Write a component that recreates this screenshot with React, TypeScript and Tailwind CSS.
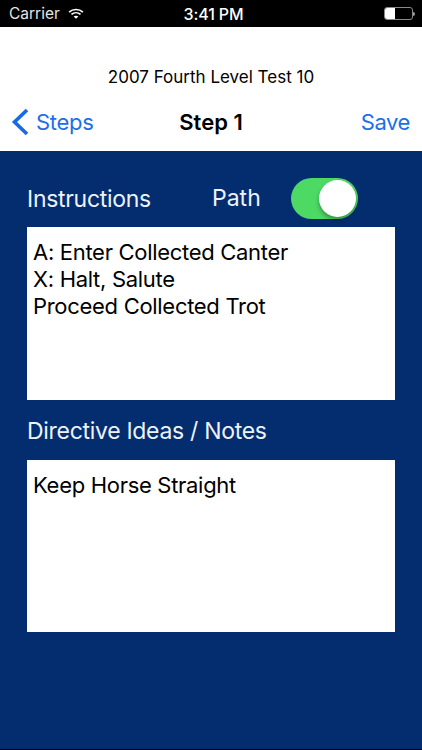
const font = { fontFamily: '"Inter", "Liberation Sans", sans-serif' };

function WifiIcon() {
  return (
    <svg width="16" height="12" viewBox="0 0 17 13" fill="none" stroke="white" strokeWidth="1.7">
      <path d="M1 4.4C5.2.6 11.8.6 16 4.4" />
      <path d="M3.6 7C6.4 4.6 10.6 4.6 13.4 7" />
      <path d="M8.5 11.6 6 9.2c1.4-1 3.6-1 5 0z" fill="white" stroke="none" />
    </svg>
  );
}

function Battery() {
  return (
    <div className="flex items-center">
      <div className="w-[29px] h-[13px] rounded-[3px] border border-[#8a8a8a]">
        <div className="w-[10px] h-full rounded-l-[2px] bg-white" />
      </div>
      <div className="w-[2px] h-[4px] bg-[#9a9a9a] rounded-r-sm" />
    </div>
  );
}

function TextBox({ lines, height }: { lines: string[]; height: string }) {
  return (
    <div className={`${height} bg-white border border-white px-[6px] pt-[11px] text-[22px] leading-[27px] tracking-[-0.3px] text-black`}>
      {lines.map((line) => (
        <div key={line} className="-ml-px">{line}</div>
      ))}
    </div>
  );
}

export default function App() {
  return (
    <div className="w-[422px] h-[750px] flex flex-col bg-black overflow-hidden" style={font}>
      <div className="relative h-[27px] shrink-0 bg-black text-white text-[15.5px] flex items-center justify-between pl-[9px] pr-[7px]">
        <div className="flex items-center gap-[8px] text-[#e4e4e4]">
          <span>Carrier</span>
          <WifiIcon />
        </div>
        <span className="absolute left-0 right-0 text-center text-[16px] font-medium tracking-[-0.1px] pl-[5px]">3:41 PM</span>
        <Battery />
      </div>

      <div className="h-[124px] shrink-0 bg-white flex flex-col">
        <div className="pt-[39px] text-center text-[17px] leading-[22px] text-black">2007 Fourth Level Test 10</div>
        <div className="relative flex items-center justify-between mt-[16px] pl-[11px] pr-[12px] h-[36px] text-[22px] text-[#1c6fe8]">
          <div className="flex items-center gap-[7px]">
            <svg width="18" height="28" viewBox="0 0 18 28" fill="none" stroke="#1769e6" strokeWidth="3.6">
              <path d="M16 2 3.5 14 16 26" />
            </svg>
            <span className="tracking-[-0.3px]">Steps</span>
          </div>
          <span className="absolute left-0 right-0 text-center text-black font-semibold tracking-[0px]">Step 1</span>
          <span className="tracking-[-0.4px]">Save</span>
        </div>
      </div>

      <div className="h-[598px] shrink-0 bg-[#032d6e] px-[27px] pt-[26px]">
        <div className="flex items-center h-[42px] text-[23px] tracking-[-0.3px]">
          <span className="w-[185px] pt-[2px] text-[#eef3fa]">Instructions</span>
          <span className="w-[79px] text-[#eef3fa] tracking-[0px]">Path</span>
          <div className="w-[67px] h-[41px] rounded-full bg-[#4cd964] flex items-center justify-end pr-[2px]">
            <div className="w-[37px] h-[37px] rounded-full bg-white shadow-[0_3px_4px_rgba(0,0,0,0.3)]" />
          </div>
        </div>
        <div className="mt-[8px]">
          <TextBox
            height="h-[173px]"
            lines={["A: Enter Collected Canter", "X: Halt, Salute", "Proceed Collected Trot"]}
          />
        </div>
        <div className="mt-[17px] h-[28px] text-[23px] leading-[28px] tracking-[-0.3px] text-[#eef3fa]">Directive Ideas / Notes</div>
        <div className="mt-[15px]">
          <TextBox height="h-[172px]" lines={["Keep Horse Straight"]} />
        </div>
      </div>
    </div>
  );
}
